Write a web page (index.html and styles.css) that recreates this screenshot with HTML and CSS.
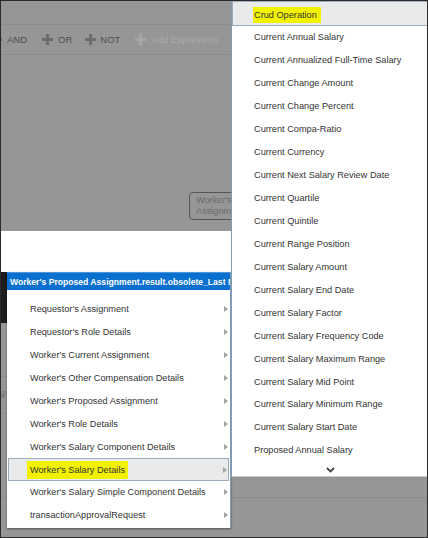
FILE: index.html
```html
<!DOCTYPE html>
<html lang="en">
<head>
    <meta charset="UTF-8">
    <title>Condition Builder</title>
    <link rel="stylesheet" href="styles.css">
</head>
<body>
    <div class="screen">
        <!-- Page behind the popups (dimmed) -->
        <div class="page">
            <div class="page-top"></div>
            <div class="toolbar">
                <span class="tool tool-cut"><svg class="plus" viewBox="0 0 11 11"><rect x="4" y="0" width="3" height="11"/><rect x="0" y="4" width="11" height="3"/></svg>AND</span>
                <span class="tool"><svg class="plus" viewBox="0 0 11 11"><rect x="4" y="0" width="3" height="11"/><rect x="0" y="4" width="11" height="3"/></svg>OR</span>
                <span class="tool"><svg class="plus" viewBox="0 0 11 11"><rect x="4" y="0" width="3" height="11"/><rect x="0" y="4" width="11" height="3"/></svg>NOT</span>
                <span class="tool tool-off"><svg class="plus" viewBox="0 0 11 11"><rect x="4" y="0" width="3" height="11"/><rect x="0" y="4" width="11" height="3"/></svg>Add Expression</span>
            </div>
            <div class="canvas">
                <div class="node"><span>Worker's Proposed</span><span>Assignment</span></div>
            </div>
            <div class="page-row"><span class="row-label">il</span></div>
            <div class="page-row page-row-tall"></div>
            <div class="page-row"></div>
        </div>

        <!-- Popups -->
        <div class="sheet"></div>
        <div class="shade"></div>

        <div class="menu menu-left">
            <div class="menu-title">Worker's Proposed Assignment.result.obsolete_Last Name</div>
            <ul class="menu-list">
                <li class="menu-item">Requestor's Assignment<i class="arrow"></i></li>
                <li class="menu-item">Requestor's Role Details<i class="arrow"></i></li>
                <li class="menu-item">Worker's Current Assignment<i class="arrow"></i></li>
                <li class="menu-item">Worker's Other Compensation Details<i class="arrow"></i></li>
                <li class="menu-item">Worker's Proposed Assignment<i class="arrow"></i></li>
                <li class="menu-item">Worker's Role Details<i class="arrow"></i></li>
                <li class="menu-item">Worker's Salary Component Details<i class="arrow"></i></li>
                <li class="menu-item active"><span class="mark">Worker's Salary Details</span><i class="arrow"></i></li>
                <li class="menu-item">Worker's Salary Simple Component Details<i class="arrow"></i></li>
                <li class="menu-item">transactionApprovalRequest<i class="arrow"></i></li>
            </ul>
        </div>

        <div class="menu menu-right">
            <ul class="menu-list">
                <li class="menu-item active first"><span class="mark">Crud Operation</span></li>
                <li class="menu-item">Current Annual Salary</li>
                <li class="menu-item">Current Annualized Full-Time Salary</li>
                <li class="menu-item">Current Change Amount</li>
                <li class="menu-item">Current Change Percent</li>
                <li class="menu-item">Current Compa-Ratio</li>
                <li class="menu-item">Current Currency</li>
                <li class="menu-item">Current Next Salary Review Date</li>
                <li class="menu-item">Current Quartile</li>
                <li class="menu-item">Current Quintile</li>
                <li class="menu-item">Current Range Position</li>
                <li class="menu-item">Current Salary Amount</li>
                <li class="menu-item">Current Salary End Date</li>
                <li class="menu-item">Current Salary Factor</li>
                <li class="menu-item">Current Salary Frequency Code</li>
                <li class="menu-item">Current Salary Maximum Range</li>
                <li class="menu-item">Current Salary Mid Point</li>
                <li class="menu-item">Current Salary Minimum Range</li>
                <li class="menu-item">Current Salary Start Date</li>
                <li class="menu-item">Proposed Annual Salary</li>
            </ul>
            <div class="more">
                <svg width="9" height="6" viewBox="0 0 9 6"><path d="M1 1 L4.5 4.5 L8 1" fill="none" stroke="#454545" stroke-width="1.8"/></svg>
            </div>
        </div>
    </div>
</body>
</html>
```

FILE: styles.css
```css
/* General Reset */
* {
    margin: 0;
    padding: 0;
    box-sizing: border-box;
}

body {
    background: #ffffff;
    font-family: "Liberation Sans", Arial, sans-serif;
}

.screen {
    position: relative;
    width: 428px;
    height: 538px;
    border: 1px solid #2b2b2b;
    background: #969696;
    overflow: hidden;
}

/* Dimmed page */
.page-top {
    height: 24px;
    border-bottom: 1px solid #8c8c8c;
}

.toolbar {
    height: 30px;
    display: flex;
    align-items: center;
    border-bottom: 1px solid #8c8c8c;
    font-size: 9.5px;
    color: #4f4f4f;
    white-space: nowrap;
}

.tool {
    display: flex;
    align-items: center;
    gap: 5px;
    margin-right: 15px;
}

.tool-cut {
    margin-left: -10px;
}

.tool:nth-child(3) {
    gap: 4px;
    margin-left: -2px;
}

.plus {
    width: 11px;
    height: 11px;
    fill: #6c6c6c;
}

.tool-off {
    color: #ababab;
}

.tool-off .plus {
    fill: #a6a6a6;
}

.canvas {
    position: relative;
    height: 321px;
}

.node {
    position: absolute;
    left: 188px;
    top: 137px;
    width: 48px;
    height: 28px;
    padding: 2px 0 0 6px;
    border: 1.5px solid #575757;
    border-radius: 4px;
    font-size: 9.2px;
    line-height: 11px;
    color: #6b6b6b;
    white-space: nowrap;
    overflow: hidden;
}

.node span {
    display: block;
}

.page-row {
    height: 37px;
    border-top: 1px solid #8c8c8c;
    font-size: 9.5px;
    color: #666;
}

.page-row-tall {
    height: 84px;
}

.row-label {
    display: block;
    padding-top: 12px;
}

/* Popups */
.sheet {
    position: absolute;
    left: 0;
    top: 230px;
    width: 230px;
    height: 91px;
    background: #ffffff;
}

.shade {
    position: absolute;
    left: 0;
    top: 271px;
    width: 6px;
    height: 51px;
    background: #1d1d1d;
}

.menu {
    position: absolute;
    background: #ffffff;
    font-size: 9.2px;
    color: #333333;
}

.menu-left {
    left: 6px;
    top: 271px;
    width: 224px;
    height: 256px;
    border-right: 1px solid #7f9bb6;
    box-shadow: 0 1px 2px rgba(0, 0, 0, 0.45);
}

.menu-right {
    left: 230px;
    top: 0;
    width: 197px;
    height: 476px;
    border-left: 1px solid #7f9bb6;
    border-bottom: 1px solid #c9c9c9;
}

.menu-title {
    height: 18px;
    line-height: 18px;
    padding-left: 3px;
    background: #0a70cf;
    border-top: 1px solid #4d95d8;
    color: #ffffff;
    font-size: 8.6px;
    font-weight: bold;
    white-space: nowrap;
    overflow: hidden;
}

.menu-list {
    list-style: none;
}

.menu-left .menu-list {
    padding-top: 7.5px;
}

.menu-item {
    height: 22.95px;
    display: flex;
    align-items: center;
    padding-left: 23px;
    padding-right: 2px;
    white-space: nowrap;
}

.menu-right .menu-item {
    padding-left: 22px;
}

.menu-item.active {
    margin: 0 1px;
    padding-left: 21px;
    background: #e9eaeb;
    border: 1px solid #9dacba;
}

.menu-right .menu-item.active {
    margin: 0;
    padding-left: 21px;
}

.menu-item.first {
    height: 25px;
    padding-top: 2px;
}

.mark {
    display: inline-block;
    height: 18px;
    line-height: 18px;
    padding: 0 3px;
    margin-left: -3px;
    background: #f2f200;
}

.menu-right .mark {
    height: 16px;
    line-height: 16px;
    padding: 0 4px 0 1px;
    margin-left: -1px;
}

.arrow {
    margin-left: auto;
    width: 0;
    height: 0;
    border-left: 4px solid #a3a3a3;
    border-top: 3.5px solid transparent;
    border-bottom: 3.5px solid transparent;
}

.menu-item.active .arrow {
    margin-right: -1px;
}

.more {
    display: flex;
    justify-content: center;
    padding-top: 5px;
}
```
